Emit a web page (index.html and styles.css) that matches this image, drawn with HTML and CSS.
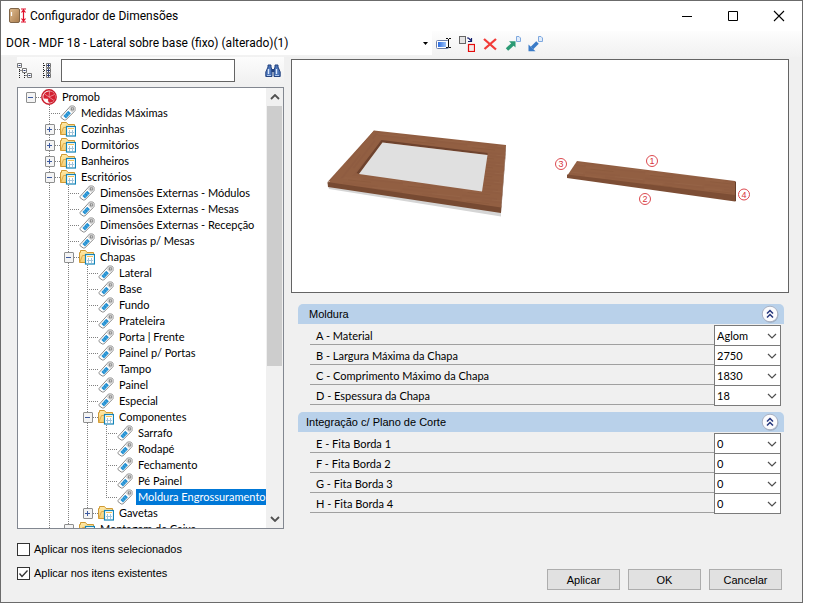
FILE: index.html
```html
<!DOCTYPE html>
<html lang="pt-BR">
<head>
<meta charset="utf-8">
<title>Configurador de Dimensões</title>
<link rel="stylesheet" href="styles.css">
</head>
<body>
<svg class="defs" aria-hidden="true">
  <defs>
    <linearGradient id="fold" x1="0" y1="0" x2="0" y2="1"><stop offset="0" stop-color="#ffe9a6"/><stop offset="1" stop-color="#f7cf74"/></linearGradient>
    <linearGradient id="door" x1="0" y1="0" x2="1" y2="1"><stop offset="0" stop-color="#e0bd91"/><stop offset="1" stop-color="#a97b4c"/></linearGradient>
    <linearGradient id="blue" x1="0" y1="0" x2="1" y2="0"><stop offset="0" stop-color="#2b6be0"/><stop offset="1" stop-color="#9cc4fa"/></linearGradient>
    <symbol id="tag" viewBox="0 0 16 16">
      <path d="M1 11.5 9.500 2.200 10.500 1H13.800L15 2.400V5.600L14.200 6.600 5.800 15H4.200L1 12.600Z" fill="#fff" stroke="#8b8b8b"/>
      <path d="M10.800 1.700H13.500L14.400 2.600V5.400L12.200 7.600 8.800 4.200Z" fill="#d5d5d5"/>
      <rect x="11.300" y="2.900" width="2" height="2" fill="#fff" stroke="#777" stroke-width=".8"/>
      <path d="M3.400 11 8.200 5.800 10.900 8.200 6 13.400Z" fill="#2290d2"/>
      <path d="M5 9.600 7.300 11.800M6.800 7.600 9 9.800" stroke="#70bce8" stroke-width=".7"/>
    </symbol>
    <symbol id="folder" viewBox="0 0 16 16">
      <path d="M.5 13.500V3.500H1.500V1.500H6.500L8 3.500H14.500V13.500Z" fill="url(#fold)" stroke="#d09a34"/>
      <path d="M.8 13.500 3.500 6.500H15" fill="none" stroke="#e0ad4b"/>
      <rect x="6.500" y="5.500" width="9" height="9.500" fill="#fff" stroke="#1484b8" stroke-width="1.200"/>
      <path d="M8 7.500H14" stroke="#f0c45a"/>
      <path d="M9.500 9V14M12.500 9V14M8 11.500H14" stroke="#a3c4d8"/>
    </symbol>
    <symbol id="chev" viewBox="0 0 10 6"><path d="M1 1 5 5 9 1" fill="none" stroke="#505050" stroke-width="1.200"/></symbol>
    <symbol id="collapse" viewBox="0 0 18 18">
      <circle cx="9.600" cy="9.900" r="7.800" fill="#8793a8" opacity=".6"/>
      <circle cx="9" cy="9" r="7.800" fill="#fbfbfd" stroke="#a9b1c2"/>
      <path d="M6 8.500 9 5.500 12 8.500M6 12.500 9 9.500 12 12.500" fill="none" stroke="#24357c" stroke-width="1.500"/>
    </symbol>
  </defs>
</svg>

<main class="window">
  <header class="titlebar">
    <svg class="app" viewBox="0 0 18 18"><rect x=".5" y="1.500" width="10" height="14" rx="1.500" fill="url(#door)" stroke="#7f6548"/><path d="M2.500 5V9" stroke="#fff" stroke-width="1.200"/><path d="M12 2H17M12 15H17M14.500 3V14M12.500 5.500 14.500 3 16.500 5.500M12.500 11.500 14.500 14 16.500 11.500" fill="none" stroke="#e0102c" stroke-width="1.200"/></svg>
    <h1>Configurador de Dimensões</h1>
    <div class="caption">
      <button type="button" aria-label="Minimizar"><svg viewBox="0 0 12 12"><path d="M1 6.500H11" stroke="#000"/></svg></button>
      <button type="button" aria-label="Maximizar"><svg viewBox="0 0 12 12"><path d="M1.500 1.500H10.500V10.500H1.500Z" fill="none" stroke="#000"/></svg></button>
      <button type="button" aria-label="Fechar"><svg viewBox="0 0 12 12"><path d="M1 1 11 11M11 1 1 11" stroke="#000" stroke-width="1.100"/></svg></button>
    </div>
  </header>

  <div class="strip">
    <div class="preset">
      <select aria-label="Configuração"><option>DOR - MDF 18 - Lateral sobre base (fixo) (alterado)(1)</option></select>
      <svg viewBox="0 0 5 3"><path d="M0 0H5L2.500 3Z"/></svg>
    </div>
    <div class="tools">
      <button type="button" aria-label="Renomear"><svg viewBox="0 0 16 16"><rect x=".5" y="4.500" width="12" height="8" rx="1" fill="#fff" stroke="#6c7fa8"/><rect x="2" y="6" width="8" height="5" fill="url(#blue)"/><path d="M10 2.500H12M13 2.500H15M12.500 3V11.500M10 11.500H12M13 11.500H15" stroke="#111"/></svg></button>
      <button type="button" aria-label="Substituir"><svg viewBox="0 0 16 16"><rect x=".5" y=".5" width="6" height="7" fill="#e4e4e4" stroke="#666"/><rect x="9.500" y="8.500" width="6" height="7" fill="#f4e8e8" stroke="#e30b0b" stroke-width="1.200"/><path d="M8 2H9.500L12 4.500M12.500 2V5.500H9" fill="none" stroke="#14206e" stroke-width="1.200"/></svg></button>
      <button type="button" aria-label="Excluir"><svg viewBox="0 0 16 16"><path d="M2 3 14 13.500M14 3 2.500 13" stroke="#f23b38" stroke-width="2.300"/></svg></button>
      <button type="button" aria-label="Exportar"><svg viewBox="0 0 16 16"><path d="M2 13.500 8.500 7.500" stroke="#2b9a74" stroke-width="3.500"/><path d="M4 5.200H10.500V11.500Z" fill="#2b9a74"/><path d="M11.500.5H14L15.500 2V5.500H11.500Z" fill="#e0ecfb" stroke="#7fa8de"/></svg></button>
      <button type="button" aria-label="Importar"><svg viewBox="0 0 16 16"><path d="M4 12 9.500 6.500" stroke="#3a7bc8" stroke-width="3.500"/><path d="M.5 8.500V15.300H7.500Z" fill="#3a7bc8"/><path d="M10.500.5H13L14.500 2V5.500H10.500Z" fill="#e0ecfb" stroke="#7fa8de"/></svg></button>
    </div>
  </div>

  <div class="content">
    <section class="left">
      <div class="search">
        <button type="button" aria-label="Recolher"><svg viewBox="0 0 16 16"><g fill="#fff" stroke="#777"><path d="M.5.5H4.500V4.500H.5ZM5.500 5.500H9.500V9.500H5.500ZM10.500 10.500H14.500V14.500H10.500Z"/></g><path d="M1.500 2.500H3.500M6.500 7.500H8.500M11.500 12.500H13.500" stroke="#2c3c70"/><path d="M2.500 6V16M2.500 7.500H5M7.500 10V16M7.500 12.500H10" stroke="#222" stroke-dasharray="1 1"/></svg></button>
        <button type="button" aria-label="Expandir"><svg viewBox="0 0 16 16"><g fill="#fff" stroke="#777"><path d="M7.500.5H11.500V4.500H7.500ZM7.500 5.500H11.500V9.500H7.500ZM7.500 10.500H11.500V14.500H7.500Z"/></g><path d="M8 2.500H11M8 7.500H11M8 12.500H11M9.500 1V4M9.500 6V9M9.500 11V14" stroke="#2c3c70"/><path d="M4.500 0V16M5 2.500H7M5 7.500H7M5 12.500H7" stroke="#222" stroke-dasharray="1 1"/></svg></button>
        <input type="text" aria-label="Pesquisar">
        <button type="button" aria-label="Localizar"><svg viewBox="0 0 16 16"><path d="M3 2H6V4L7 7V13.500H.8V9L3 4ZM10 2H13V4L15.200 9V13.500H9V7L10 4Z" fill="#4b74b8" stroke="#23427f"/><path d="M6.500 6H9.500V9H6.500Z" fill="#23427f"/><path d="M3.500 6V11M11.500 6V11" stroke="#d8e7fb" stroke-width="1.400"/><path d="M2 12.500H6M10 12.500H14" stroke="#a9c5ee"/></svg></button>
      </div>
      <div class="treebox">
        <nav class="tree" aria-label="Dimensões">
          <ul>
            <li class="root"><div class="row"><i class="box"></i><svg viewBox="0 0 16 16"><circle cx="8" cy="8" r="7.200" fill="#fbe9ea" stroke="#c91c2b" stroke-width="1.400"/><path d="M7.500 2.400A5.700 5.700 0 1 1 8 13.600Q6.500 13 7.200 9.800L2.600 9.500A5.500 5.500 0 0 1 7.500 2.400Z" fill="#d51f30"/><path d="M3 10.500H6.500V13.500Q4 12.800 3 10.500Z" fill="#fff"/><path d="M8 8 8.600 2M8 8 13.500 5.500M8 8 13 11.500M8 8 3.600 5" stroke="#f3c3c7" stroke-width=".6"/></svg><span>Promob</span></div>
              <ul>
                <li><div class="row"><i></i><svg><use href="#tag"/></svg><span>Medidas Máximas</span></div></li>
                <li><div class="row"><i class="box plus"></i><svg><use href="#folder"/></svg><span>Cozinhas</span></div></li>
                <li><div class="row"><i class="box plus"></i><svg><use href="#folder"/></svg><span>Dormitórios</span></div></li>
                <li><div class="row"><i class="box plus"></i><svg><use href="#folder"/></svg><span>Banheiros</span></div></li>
                <li><div class="row"><i class="box"></i><svg><use href="#folder"/></svg><span>Escritórios</span></div>
                  <ul>
                    <li><div class="row"><i></i><svg><use href="#tag"/></svg><span>Dimensões Externas - Módulos</span></div></li>
                    <li><div class="row"><i></i><svg><use href="#tag"/></svg><span>Dimensões Externas - Mesas</span></div></li>
                    <li><div class="row"><i></i><svg><use href="#tag"/></svg><span>Dimensões Externas - Recepção</span></div></li>
                    <li><div class="row"><i></i><svg><use href="#tag"/></svg><span>Divisórias p/ Mesas</span></div></li>
                    <li><div class="row"><i class="box"></i><svg><use href="#folder"/></svg><span>Chapas</span></div>
                      <ul>
                        <li><div class="row"><i></i><svg><use href="#tag"/></svg><span>Lateral</span></div></li>
                        <li><div class="row"><i></i><svg><use href="#tag"/></svg><span>Base</span></div></li>
                        <li><div class="row"><i></i><svg><use href="#tag"/></svg><span>Fundo</span></div></li>
                        <li><div class="row"><i></i><svg><use href="#tag"/></svg><span>Prateleira</span></div></li>
                        <li><div class="row"><i></i><svg><use href="#tag"/></svg><span>Porta | Frente</span></div></li>
                        <li><div class="row"><i></i><svg><use href="#tag"/></svg><span>Painel p/ Portas</span></div></li>
                        <li><div class="row"><i></i><svg><use href="#tag"/></svg><span>Tampo</span></div></li>
                        <li><div class="row"><i></i><svg><use href="#tag"/></svg><span>Painel</span></div></li>
                        <li><div class="row"><i></i><svg><use href="#tag"/></svg><span>Especial</span></div></li>
                        <li><div class="row"><i class="box"></i><svg><use href="#folder"/></svg><span>Componentes</span></div>
                          <ul>
                            <li><div class="row"><i></i><svg><use href="#tag"/></svg><span>Sarrafo</span></div></li>
                            <li><div class="row"><i></i><svg><use href="#tag"/></svg><span>Rodapé</span></div></li>
                            <li><div class="row"><i></i><svg><use href="#tag"/></svg><span>Fechamento</span></div></li>
                            <li><div class="row"><i></i><svg><use href="#tag"/></svg><span>Pé Painel</span></div></li>
                            <li class="end"><div class="row"><i></i><svg><use href="#tag"/></svg><span class="selected">Moldura Engrossuramento</span></div></li>
                          </ul>
                        </li>
                        <li class="end"><div class="row"><i class="box plus"></i><svg><use href="#folder"/></svg><span>Gavetas</span></div></li>
                      </ul>
                    </li>
                    <li><div class="row"><i class="box"></i><svg><use href="#folder"/></svg><span>Montagem de Caixa</span></div></li>
                  </ul>
                </li>
              </ul>
            </li>
          </ul>
        </nav>
        <div class="scroll">
          <svg viewBox="0 0 10 6"><path d="M1 5 5 1 9 5" fill="none" stroke="#505050" stroke-width="1.800"/></svg>
          <div class="thumb"></div>
          <svg viewBox="0 0 10 6"><path d="M1 1 5 5 9 1" fill="none" stroke="#505050" stroke-width="1.800"/></svg>
        </div>
      </div>
    </section>

    <section class="right">
      <div class="preview">
        <svg viewBox="292 60 496 232" role="img" aria-label="Moldura">
          <defs>
            <pattern id="wood" width="60" height="9" patternUnits="userSpaceOnUse" patternTransform="rotate(6)"><rect width="60" height="9" fill="#925f42"/><path d="M0 2H35M20 5H60M5 7.500H28" stroke="#8c5a3e" stroke-width=".8"/><path d="M30 3.500H58M0 6H18" stroke="#976447" stroke-width=".7"/></pattern>
            <pattern id="woodv" width="60" height="8" patternUnits="userSpaceOnUse" patternTransform="rotate(128)"><rect width="60" height="8" fill="#925f42"/><path d="M0 2H35M20 5H60" stroke="#8a583d" stroke-width=".8"/></pattern>
          </defs>
          <path d="M328 186 501 211V216.500L329 189Z" fill="#d5d5d5"/>
          <path d="M374 130.500 506 145 501 209 327.500 184Z" fill="url(#wood)"/>
          <path d="M374 130.500 383 142 359 173.500 327.500 182Z" fill="url(#woodv)"/>
          <path d="M327.500 182 501 207.500V213L328 187Z" fill="#774a32"/>
          <path d="M506 145V150L501 213V207Z" fill="#6f432e"/>
          <path d="M381.500 140 487.500 153V155L382.500 142.500 359 174 356.500 173Z" fill="#6e432e"/>
          <path d="M382.500 142.500 487.500 155 482 191.500 359 174Z" fill="#e0e0e0"/>
          <path d="M577 161 735 181V198L567 176Z" fill="url(#wood)"/>
          <path d="M567 174.500 735 195V201.500L567 178Z" fill="#7d4e35"/>
          <path d="M735 181 736 182V201L735 201.500Z" fill="#673f2a"/>
          <g class="marks"><circle cx="652" cy="161" r="5.500"/><circle cx="645" cy="199" r="5.500"/><circle cx="561" cy="164" r="5.500"/><circle cx="744" cy="194.500" r="5.500"/><text x="652" y="164">1</text><text x="645" y="202">2</text><text x="561" y="167">3</text><text x="744" y="198">4</text></g>
        </svg>
      </div>

      <section class="group">
        <div class="head"><h2 class="first">Moldura</h2><button type="button" aria-label="Recolher Moldura"><svg><use href="#collapse"/></svg></button></div>
        <div class="fields">
          <div class="field"><label for="a">A - Material</label><div class="combo"><select id="a"><option>Aglom</option></select><svg><use href="#chev"/></svg></div></div>
          <div class="field"><label for="b">B - Largura Máxima da Chapa</label><div class="combo"><select id="b"><option>2750</option></select><svg><use href="#chev"/></svg></div></div>
          <div class="field"><label for="c">C - Comprimento Máximo da Chapa</label><div class="combo"><select id="c"><option>1830</option></select><svg><use href="#chev"/></svg></div></div>
          <div class="field"><label for="d">D - Espessura da Chapa</label><div class="combo"><select id="d"><option>18</option></select><svg><use href="#chev"/></svg></div></div>
        </div>
      </section>
      <section class="group">
        <div class="head"><h2>Integração c/ Plano de Corte</h2><button type="button" aria-label="Recolher Integração"><svg><use href="#collapse"/></svg></button></div>
        <div class="fields">
          <div class="field"><label for="e">E - Fita Borda 1</label><div class="combo"><select id="e"><option>0</option></select><svg><use href="#chev"/></svg></div></div>
          <div class="field"><label for="f">F - Fita Borda 2</label><div class="combo"><select id="f"><option>0</option></select><svg><use href="#chev"/></svg></div></div>
          <div class="field"><label for="g">G - Fita Borda 3</label><div class="combo"><select id="g"><option>0</option></select><svg><use href="#chev"/></svg></div></div>
          <div class="field"><label for="h">H - Fita Borda 4</label><div class="combo"><select id="h"><option>0</option></select><svg><use href="#chev"/></svg></div></div>
        </div>
      </section>
    </section>
  </div>

  <footer class="footer">
    <div class="checks">
      <label><input type="checkbox"><span>Aplicar nos itens selecionados</span></label>
      <label><input type="checkbox" checked><svg viewBox="0 0 13 13"><path d="M2.500 6.500 5 9.500 10.500 3.500" fill="none" stroke="#333" stroke-width="1.300"/></svg><span>Aplicar nos itens existentes</span></label>
    </div>
    <div class="actions">
      <button type="button">Aplicar</button>
      <button type="button">OK</button>
      <button type="button">Cancelar</button>
    </div>
  </footer>
</main>
</body>
</html>
```
FILE: styles.css
```css
* { box-sizing: border-box; }
body {
  margin: 0;
  background: #fff;
  color: #000;
  font: 11px/16px "Liberation Sans", Arial, sans-serif;
}
button, input, select { font: inherit; color: inherit; border-radius: 0; }
h1, h2 { margin: 0; font: inherit; }
svg { display: block; flex: none; }
.defs { position: absolute; width: 0; height: 0; }

.window {
  margin: 0 11px 8px 0;
  border: 1px solid #6b6b6b;
  background: #f0f0f0;
}

.titlebar { display: flex; align-items: center; height: 30px; padding-left: 8px; background: #fff; }
.app { width: 18px; height: 18px; }
.titlebar h1, .preset select { font-family: Roboto, sans-serif; font-size: 12px; }
.titlebar h1 { flex: 1; margin-left: 3px; }
.caption { display: flex; }
.caption button { display: grid; place-items: center; width: 46px; height: 30px; padding: 0; border: 0; background: none; }
.caption svg { width: 12px; height: 12px; }

.strip { display: flex; height: 26px; background: linear-gradient(#fdfdfd, #f1f1f1); }
.preset { display: grid; flex: 0 0 431px; height: 24px; background: #fff; }
.preset > * { grid-area: 1 / 1; }
.preset select {
  appearance: none;
  width: 100%;
  padding: 0 14px 0 5px;
  border: 0;
  background: none;
}
.preset svg { place-self: center end; width: 5px; height: 3px; margin-right: 4px; pointer-events: none; }
.tools { display: flex; align-items: center; gap: 7px; padding-left: 4px; }
.tools button, .search button { padding: 0; border: 0; background: none; }
.tools svg, .search svg { width: 16px; height: 16px; }

.content { display: flex; gap: 7px; padding: 0 13px 0 16px; }
.left { flex: 0 0 267px; min-width: 0; }
.search { display: flex; align-items: center; gap: 6px; height: 28px; padding-bottom: 1px; background: linear-gradient(#fcfcfc, #f0f0f0); }
.search input { flex: 0 0 174px; height: 23px; margin: 0 24px 0 0; padding: 0 4px; border: 1px solid #646464; background: #fff; }

.treebox { display: flex; height: 442px; margin-top: 2px; border: 1px solid #828790; background: #fff; }
.tree { flex: 1; min-width: 0; overflow: hidden; padding: 1px 0 0 3px; }
.tree, .field { font-family: Lato, sans-serif; }
.tree ul { margin: 0; padding: 0; list-style: none; }
.tree ul ul { padding-left: 19px; }
.tree li { position: relative; }
.tree li::before {
  content: "";
  position: absolute;
  top: 0;
  bottom: 0;
  left: 9px;
  width: 1px;
  background: repeating-linear-gradient(#808080 0 1px, transparent 1px 2px);
}
.tree li.end::before { bottom: auto; height: 9px; }
.tree li.root::before { display: none; }
.row { display: flex; align-items: center; height: 16px; white-space: nowrap; }
.row i {
  display: flex;
  align-items: center;
  position: relative;
  width: 20px;
  height: 16px;
}
.row i::after { content: ""; width: 11px; height: 1px; margin-left: 9px; background: repeating-linear-gradient(90deg, #808080 0 1px, transparent 1px 2px); }
.row i.box::before {
  content: "";
  width: 9px;
  height: 9px;
  margin-left: 5px;
  border: 1px solid #8e8f8f;
  border-radius: 1px;
  background: linear-gradient(#3c5aa0, #3c5aa0) center / 5px 1px no-repeat, #f4f4f4;
}
.row i.plus::before { background: linear-gradient(#3c5aa0, #3c5aa0) center / 5px 1px no-repeat, linear-gradient(#3c5aa0, #3c5aa0) center / 1px 5px no-repeat, #f4f4f4; }
.row i.box::after { width: 6px; margin-left: 0; }
.row svg { width: 16px; height: 16px; margin-right: 3px; }
.row span { padding: 0 2px; }
.row .selected { background: #0078d7; color: #fff; }

.scroll { display: flex; flex: 0 0 17px; flex-direction: column; align-items: center; padding: 6px 0; background: #f0f0f0; }
.scroll svg { width: 10px; height: 6px; }
.thumb { width: 15px; height: 260px; margin: 6px 0 auto; background: #cdcdcd; }

.right { flex: 1; min-width: 0; padding-top: 2px; }
.preview { height: 234px; border: 1px solid #646464; background: #fff; }
.preview svg { width: 100%; height: 100%; }
.marks { fill: none; stroke: #dc4a50; stroke-width: 1; }
.marks text { fill: #d8343c; stroke: none; font-size: 9px; text-anchor: middle; }

.group { margin: 11px 5px 0 7px; }
.group + .group { margin-top: 7px; }
.head { display: flex; align-items: center; height: 20px; padding: 0 5px 0 8px; border-radius: 5px 5px 0 0; background: #b9d1ea; }
.head h2 { flex: 1; }
.head .first { padding-left: 3px; }
.head button { padding: 0; border: 0; background: none; }
.head svg { width: 18px; height: 18px; }
.fields { padding: 1px 3px 0 12px; }
.field { display: flex; height: 20px; }
.field label { flex: 1; padding: 3px 0 0 6px; border-bottom: 1px solid #a0a0a0; }
.combo { display: grid; flex: 0 0 67px; height: 21px; }
.combo > * { grid-area: 1 / 1; }
.combo select { appearance: none; width: 100%; height: 21px; padding: 0 14px 0 2px; border: 1px solid #7a7a7a; background: #fff; }
.combo svg { place-self: center end; width: 10px; height: 6px; margin-right: 4px; pointer-events: none; }

.footer { display: flex; justify-content: space-between; align-items: flex-end; padding: 12px 20px 12px 16px; }
.checks { display: flex; flex-direction: column; gap: 8px; padding-bottom: 9px; }
.checks label { display: grid; grid-template-columns: 13px auto; column-gap: 4px; align-items: center; }
.checks input { appearance: none; grid-area: 1 / 1; width: 13px; height: 13px; margin: 0; border: 1px solid #333; background: #fff; }
.checks svg { position: relative; grid-area: 1 / 1; width: 13px; height: 13px; pointer-events: none; }
.checks span { grid-area: 1 / 2; }
.actions { display: flex; gap: 8px; }
.actions button { width: 73px; height: 21px; padding: 0; border: 1px solid #adadad; background: #e1e1e1; }
```
